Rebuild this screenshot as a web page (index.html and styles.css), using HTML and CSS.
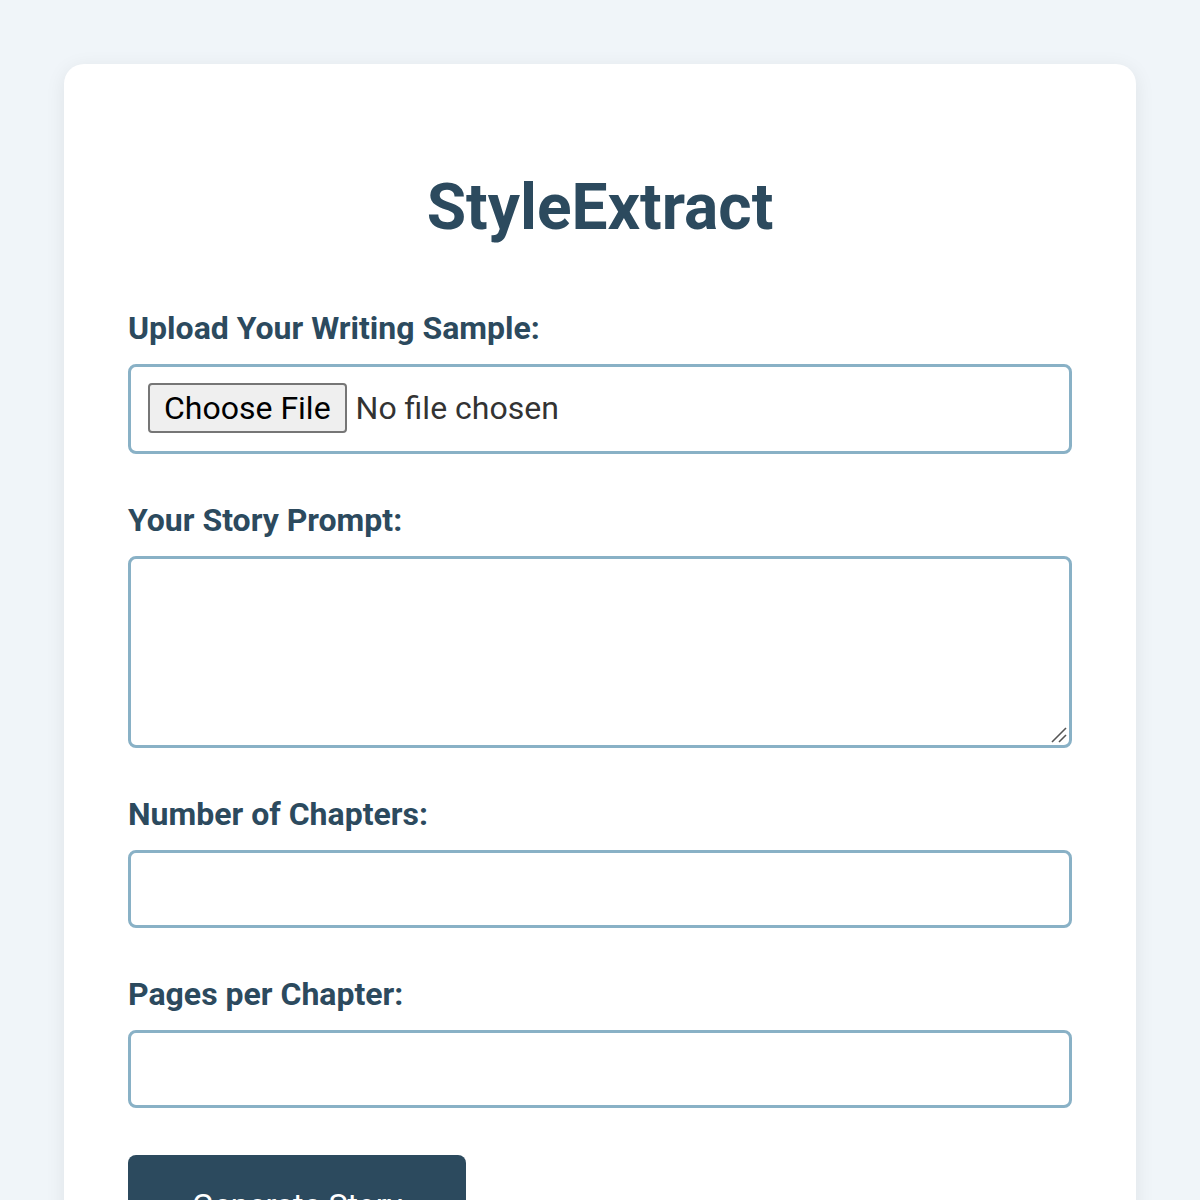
FILE: index.html
```html
<!DOCTYPE html>
<html lang="en">
<head>
<meta charset="utf-8">
<title>StyleExtract</title>
<link rel="stylesheet" href="styles.css">
</head>
<body>
<main class="card">
  <h1 class="title">StyleExtract</h1>
  <form class="form">
    <div class="group">
      <label class="label" for="sample">Upload Your Writing Sample:</label>
      <input class="field file" type="file" id="sample">
    </div>
    <div class="group">
      <label class="label" for="prompt">Your Story Prompt:</label>
      <div class="area-wrap">
        <textarea class="field area" id="prompt"></textarea>
        <svg class="grip" width="18" height="18" viewBox="0 0 18 18" aria-hidden="true">
          <line x1="2" y1="16" x2="16" y2="2" stroke="#555" stroke-width="1.6"/>
          <line x1="9" y1="16" x2="16" y2="9" stroke="#555" stroke-width="1.6"/>
        </svg>
      </div>
    </div>
    <div class="group">
      <label class="label" for="chapters">Number of Chapters:</label>
      <input class="field" type="number" id="chapters">
    </div>
    <div class="group">
      <label class="label" for="pages">Pages per Chapter:</label>
      <input class="field" type="number" id="pages">
    </div>
    <button class="submit" type="button">Generate Story</button>
  </form>
</main>
</body>
</html>
```
FILE: styles.css
```css
* { box-sizing: border-box; }
html, body { margin: 0; }
body {
  background: #f0f5f9;
  font-family: Roboto, "Liberation Sans", sans-serif;
  padding: 64px;
}
.card {
  background: #ffffff;
  border-radius: 20px;
  box-shadow: 0 4px 20px rgba(0, 0, 0, 0.08);
  padding: 64px;
  min-height: 1200px;
}
.title {
  margin: 42px 0 64px;
  text-align: center;
  font-size: 64px;
  font-weight: 700;
  color: #2c4a5e;
  line-height: normal;
}
.form { display: flex; flex-direction: column; }
.group { display: flex; flex-direction: column; margin-bottom: 47px; }
.label {
  font-size: 32px;
  font-weight: 700;
  color: #2c4a5e;
  margin-bottom: 17px;
}
.field {
  width: 100%;
  font-family: Roboto, "Liberation Sans", sans-serif;
  font-size: 32px;
  color: #333;
  padding: 16px;
  border: 3px solid #89b1c6;
  border-radius: 8px;
  background: #fff;
  height: 78px;
  display: block;
}
.file {
  height: 90px;
  padding: 16px 17px;
  display: flex;
  align-items: center;
}
.file::file-selector-button {
  font-family: Roboto, "Liberation Sans", sans-serif;
  font-size: 32px;
  color: #000;
  background: #efefef;
  border: 2px solid #767676;
  border-radius: 4px;
  height: 50px;
  padding: 0 14px;
  margin-right: 9px;
}
.area-wrap { position: relative; }
.area {
  height: 192px;
  resize: none;
}
.grip {
  position: absolute;
  right: 4px;
  bottom: 4px;
  pointer-events: none;
}
.submit {
  align-self: flex-start;
  background: #2c4a5e;
  color: #fff;
  font-family: Roboto, "Liberation Sans", sans-serif;
  font-size: 32px;
  border: none;
  border-radius: 8px;
  padding: 31px 64px;
}
```
